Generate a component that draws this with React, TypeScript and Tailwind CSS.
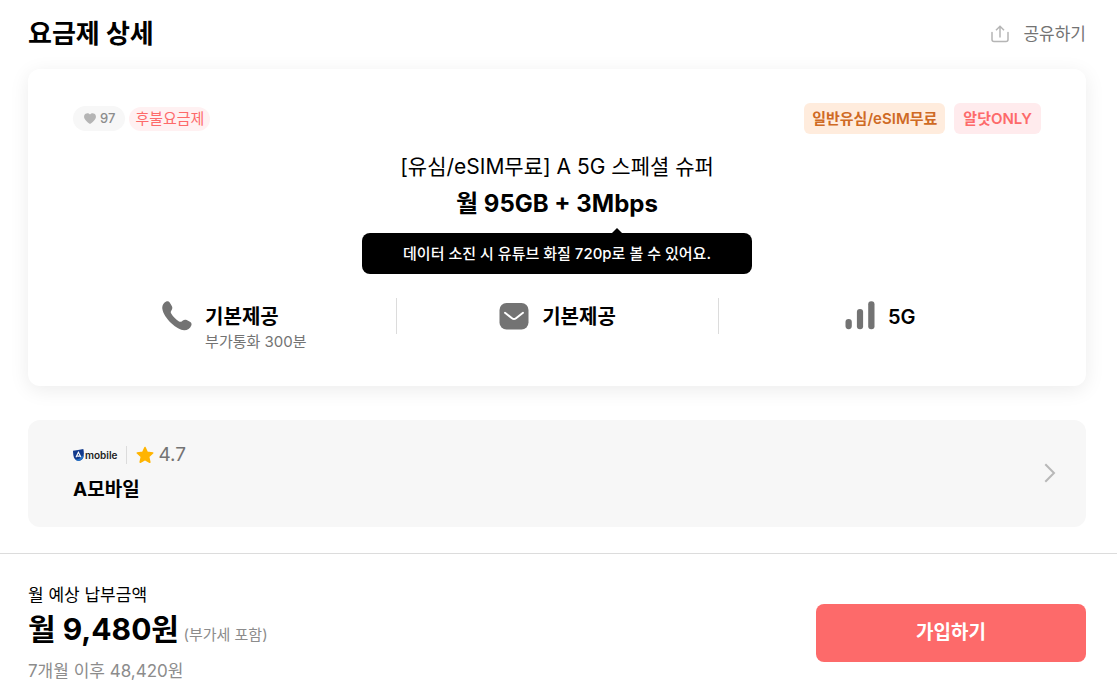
import type { ReactNode } from "react";

type Stat = {
  id: string;
  icon: ReactNode;
  value: string;
  note?: string;
};

function ShareIcon() {
  return (
    <svg width="18" height="18" viewBox="0 0 18 18" fill="none" stroke="#b5b5b5" strokeWidth="1.5" aria-hidden="true">
      <path d="M1 7.5V14.5a2 2 0 0 0 2 2H15a2 2 0 0 0 2-2V7.5" strokeLinecap="round" />
      <path d="M9 12.5V1.5M5 5.2 9 1.3l4 3.9" />
    </svg>
  );
}

function HeartIcon() {
  return (
    <svg width="12" height="11" viewBox="0 0 12 11" fill="#b5b5b5" aria-hidden="true">
      <path d="M6 1.5C7.1.1 9-.2 10.4.7 12 1.7 12.4 3.9 11.4 5.7 10.5 7.4 8.6 9.2 6.8 10.5a1.4 1.4 0 0 1-1.6 0C3.4 9.2 1.5 7.4.6 5.7-.4 3.9 0 1.7 1.6.7 3-.2 4.9.1 6 1.5Z" />
    </svg>
  );
}

function PhoneIcon() {
  return (
    <svg width="30" height="30" viewBox="0 0 30 30" fill="#737373" aria-hidden="true">
      <path d="M4.2.6C5.5 0 6.9.3 7.7 1.5L9.8 4.9C10.5 6.1 10.5 7.5 9.8 8.7L9.1 10C8.6 10.9 8.7 11.7 9.2 12.6 10.9 15.6 13.7 18.4 17 20.4 18 21 18.8 21 19.7 20.4L20.9 19.5C22.1 18.6 23.4 18.5 24.7 19.1L27.9 20.7C29.4 21.5 29.9 22.9 29.3 24.5 28.2 27.5 25.3 29.4 22.1 29.3 18.5 29.1 13.8 26.6 9.6 22.6 4.4 17.6.9 12.2.3 7.5-.1 4.6 1.6 1.7 4.2.6Z" />
    </svg>
  );
}

function MailIcon() {
  return (
    <svg width="30" height="30" viewBox="0 0 30 30" fill="none" aria-hidden="true">
      <rect x="0.5" y="2" width="29" height="26.5" rx="7" fill="#737373" />
      <path d="M6 11.8 13 17.2a3.2 3.2 0 0 0 4 0L24 11.8" stroke="#fff" strokeWidth="2" strokeLinecap="round" />
    </svg>
  );
}

function SignalIcon() {
  return (
    <svg width="30" height="30" viewBox="0 0 30 30" fill="#737373" aria-hidden="true">
      <rect x="0.5" y="18" width="6.3" height="10.2" rx="3.1" />
      <rect x="11.9" y="8" width="6.2" height="20.2" rx="3" />
      <rect x="23.2" y="0.3" width="6.3" height="27.9" rx="3" />
    </svg>
  );
}

function CarrierMark() {
  return (
    <svg width="11" height="12" viewBox="0 0 11 12" aria-hidden="true">
      <path d="M0 1.8Q5 .9 10.3 0 11.4 4.5 10.2 8.5 9.3 11.2 5.5 12 2.4 11.6 1.1 9 0 6 0 1.8Z" fill="#123a8c" />
      <path d="M10.8 5Q10.9 11.3 5.5 12 3.5 11.7 2.3 10.6 8 10.3 10.8 5Z" fill="#2473c8" />
      <path d="M3 8.3 5.4 3.3 8 8.3M4.2 7.1H6.8" fill="none" stroke="#fff" strokeWidth="1.1" />
    </svg>
  );
}

function StarIcon() {
  return (
    <svg width="18" height="18" viewBox="0 0 18 18" fill="#ffb400" stroke="#ffb400" strokeWidth="1.6" strokeLinejoin="round" aria-hidden="true">
      <path d="M9 1.6 11.2 6.4 16.7 7 12.6 10.6 13.8 16.2 9 13.5 4.2 16.2 5.4 10.6 1.3 7 6.8 6.4Z" />
    </svg>
  );
}

function ChevronIcon() {
  return (
    <svg width="12" height="20" viewBox="0 0 12 20" fill="none" stroke="#b8b8b8" strokeWidth="2" aria-hidden="true">
      <path d="M1.3 1.2 10 10 1.3 18.8" />
    </svg>
  );
}

const STATS: Stat[] = [
  { id: "call", icon: <PhoneIcon />, value: "기본제공", note: "부가통화 300분" },
  { id: "sms", icon: <MailIcon />, value: "기본제공" },
  { id: "network", icon: <SignalIcon />, value: "5G" }
];

export default function App() {
  return (
    <div className="min-h-screen bg-white font-['Inter','Noto_Sans_CJK_KR',sans-serif] text-black">
      <main className="pr-[31px] pl-7">
        <header className="flex items-center justify-between pt-4 pb-[17px]">
          <h1 className="text-[26px] leading-9 font-bold">요금제 상세</h1>
          <button type="button" className="flex items-center gap-3.5 text-[17px] leading-6 text-[#737373]">
            <ShareIcon />
            공유하기
          </button>
        </header>

        <section className="rounded-xl bg-white px-[45px] pt-[34px] pb-[37px] shadow-[0_4px_20px_rgba(0,0,0,0.08)]">
          <div className="flex items-center justify-between">
            <div className="flex items-center gap-1">
              <button
                type="button"
                className="flex h-[25px] items-center gap-1 rounded-full bg-[#f7f7f7] pr-2.5 pl-[11px] text-[13px] font-medium text-[#8c8c8c]"
              >
                <HeartIcon />
                97
              </button>
              <span className="rounded-full bg-[#fff1f2] px-1.5 text-[15px] leading-6 text-[#fd6a6a]">후불요금제</span>
            </div>
            <div className="flex gap-[9px] text-[15px] leading-[31px] font-semibold">
              <span className="rounded-md bg-[#ffecdd] px-2 text-[#cf6a24]">일반유심/eSIM무료</span>
              <span className="rounded-md bg-[#ffebed] px-[9px] text-[#fd6a6a]">알닷ONLY</span>
            </div>
          </div>

          <div className="mt-[17px] flex flex-col items-center">
            <h2 className="text-[21px] leading-8">[유심/eSIM무료] A 5G 스페셜 슈퍼</h2>
            <p className="mt-[3px] text-2xl leading-9 font-bold">월 95GB + 3Mbps</p>
            <p className="relative mt-[11px] rounded-lg bg-black px-[41px] text-[15px] leading-[41px] font-medium text-white">
              <span className="absolute -top-[5px] left-[64%] border-x-[5px] border-b-[5px] border-x-transparent border-b-black" />
              데이터 소진 시 유튜브 화질 720p로 볼 수 있어요.
            </p>
          </div>

          <ul className="mt-6 grid grid-cols-3">
            {STATS.map((stat, i) => (
              <li key={stat.id} className="flex items-start">
                {i > 0 ? <span className="h-9 w-px bg-[#dcdcdc]" /> : null}
                <div className="flex flex-1 items-start justify-center gap-[13px] pt-[3px]">
                  {stat.icon}
                  <div>
                    <p className="text-xl leading-[33px] font-semibold">{stat.value}</p>
                    {stat.note ? <p className="text-[15px] leading-[15px] text-[#737373]">{stat.note}</p> : null}
                  </div>
                </div>
              </li>
            ))}
          </ul>
        </section>

        <a href="#carrier" className="mt-[34px] flex items-center justify-between rounded-xl bg-[#f7f7f7] pt-[21px] pr-[30px] pb-[23px] pl-[45px]">
          <div>
            <div className="flex h-7 items-center">
              <CarrierMark />
              <span className="ml-px text-[10px] font-semibold text-[#222]">mobile</span>
              <span className="mx-[9px] h-[18px] w-px bg-[#dcdcdc]" />
              <StarIcon />
              <span className="ml-1 text-[19px] leading-7 text-[#737373]">4.7</span>
            </div>
            <p className="mt-[7px] text-[19px] leading-7 font-bold">A모바일</p>
          </div>
          <ChevronIcon />
        </a>
      </main>

      <footer className="mt-[26px] flex items-center justify-between border-t border-[#dcdcdc] pt-[29px] pr-[31px] pb-4 pl-7">
        <div>
          <p className="text-[17px] leading-6">월 예상 납부금액</p>
          <p className="leading-[44px]">
            <strong className="text-[30px] font-bold">월 9,480원</strong>{" "}
            <span className="text-[15px] text-[#8c8c8c]">(부가세 포함)</span>
          </p>
          <p className="mt-0.5 text-[17px] leading-6 text-[#8c8c8c]">7개월 이후 48,420원</p>
        </div>
        <button type="button" className="h-[58px] w-[270px] rounded-lg bg-[#fd6a6a] text-[19px] font-bold text-white">
          가입하기
        </button>
      </footer>
    </div>
  );
}
